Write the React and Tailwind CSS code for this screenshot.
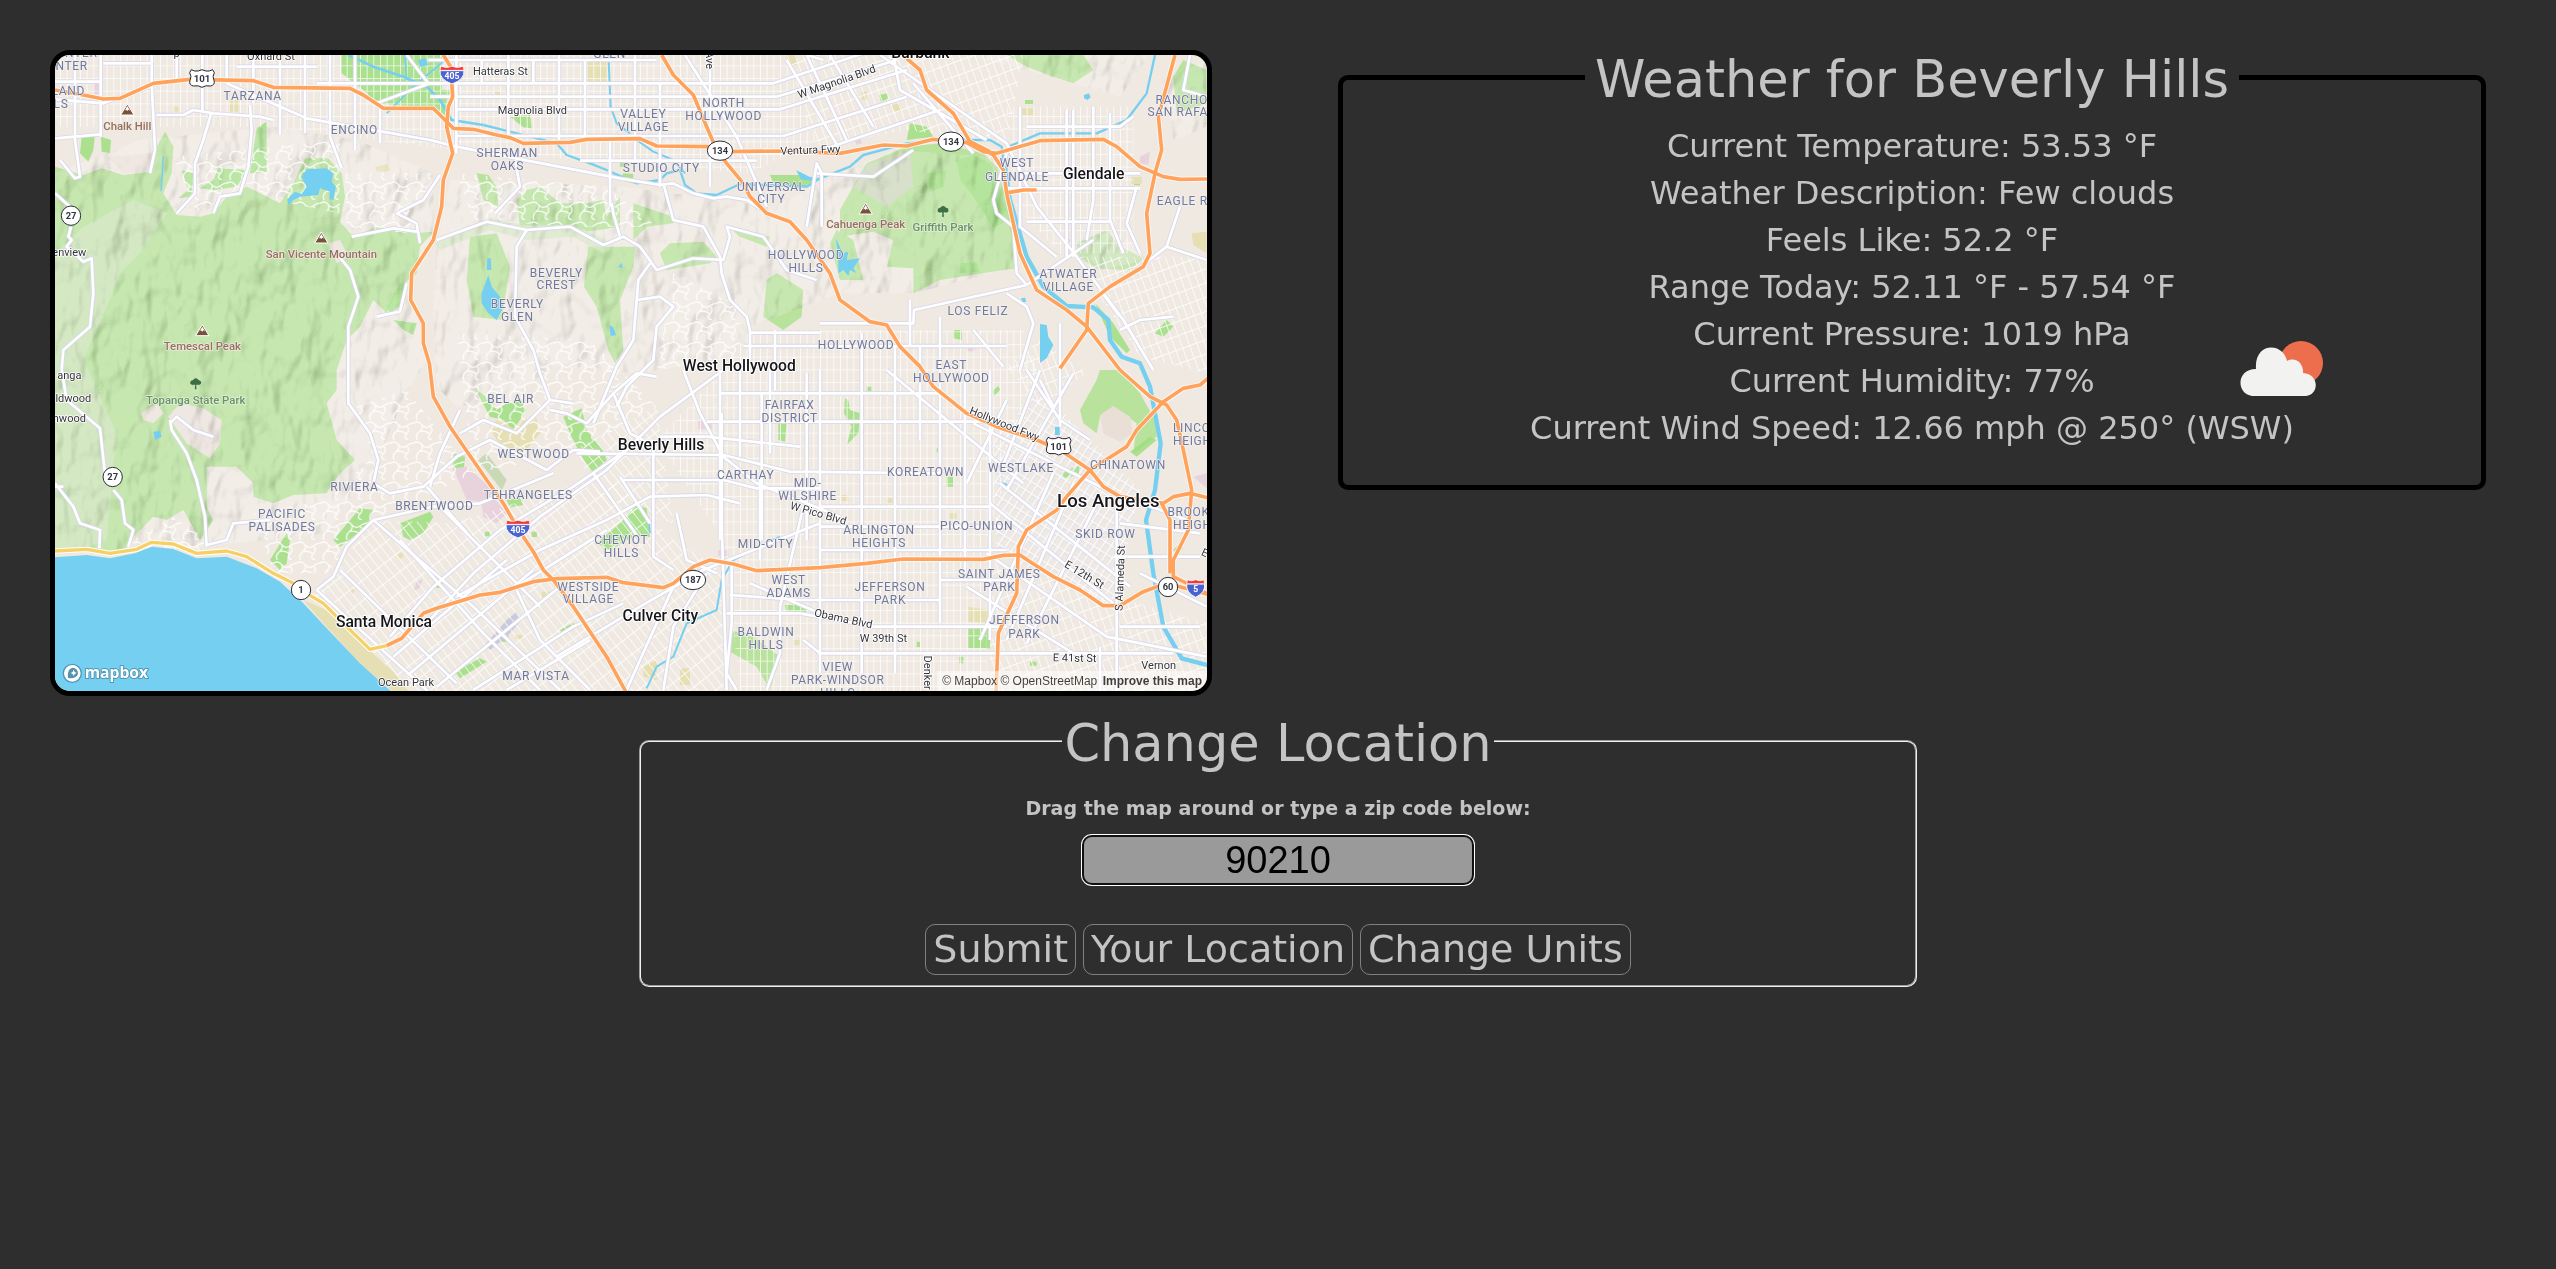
import React, { useState } from "react";

/* ---------- map data: one unit is a third of a map pixel ---------- */

const HILLS = [
  "M45 380 130 405 185 385 250 405 330 395 345 330 375 275 400 320 395 400 370 460 410 525 480 530 520 520 560 470 620 440 720 490 760 430 795 355 865 355 905 400 915 470 900 545 940 590 1010 560 1120 580 1180 575 1140 620 1130 700 1080 740 1040 820 1000 780 960 860 920 900 890 990 890 1050 860 1090 890 1200 945 1260 900 1300 860 1360 760 1365 700 1390 640 1370 640 1330 590 1280 500 1280 500 1400 520 1440 480 1500 430 1410 380 1440 340 1430 270 1500 265 1520 210 1545 130 1530 45 1535Z",
  "M1290 590 1370 580 1410 680 1385 840 1300 830 1280 720Z",
  "M1430 480 1460 450 1500 440 1560 490 1640 490 1690 480 1700 530 1740 470 1740 560 1640 575 1570 555 1440 560Z",
  "M1310 400 1345 405 1370 440 1375 500 1330 480Z",
  "M1645 620 1785 620 1780 680 1740 780 1750 930 1725 970 1705 930 1670 800 1632 740Z",
  "M1780 490 1900 530 1900 550 1820 560 1780 600Z",
  "M1860 640 1890 610 1990 605 2030 650 2010 670 1880 690Z",
  "M2060 555 2190 590 2180 620 2100 590Z",
  "M2180 720 2210 700 2290 750 2285 830 2230 870 2170 830Z",
  "M2400 510 2450 420 2480 370 2600 320 2700 310 2830 340 2870 380 2900 480 2915 560 2920 640 2925 685 2700 720 2620 760 2620 685 2540 680 2560 600 2500 575 2400 590Z",
  "M2370 610 2390 570 2440 600 2470 720 2400 720Z",
  "M3110 610 3200 570 3240 620 3310 655 3270 690 3170 685 3115 650Z",
  "M3120 1110 3170 1020 3180 990 3240 990 3300 1060 3350 1150 3350 1190 3280 1240 3290 1150 3220 1100 3180 1130 3170 1180 3130 1150Z",
  "M2070 1770 2140 1790 2220 1850 2190 1950 2150 1880 2060 1830Z",
  "M2900 45 3130 45 3160 90 3100 130 3040 110 2960 80Z",
  "M3430 60 3500 90 3500 190 3410 220 3400 110Z",
];

/* dry slopes, half covered with scrub */
const SCRUB = [
  "M45 640 130 560 280 480 380 520 300 640 240 700 200 800 130 960 230 1180 200 1500 120 1530 45 1530Z",
  "M1185 610 1350 535 1450 555 1600 555 1700 600 1690 640 1600 590 1460 600 1350 570 1200 630Z",
  "M3110 610 3200 570 3240 620 3310 655 3270 690 3170 685 3115 650Z",
];

const PARKS = [
  "M950 45 1205 45 1205 190 1170 205 1010 190 970 150 905 100 905 45Z",
  "M1170 150 1230 150 1220 230 1180 200Z",
  "M125 290 165 280 160 330 145 365 120 340Z",
  "M183 290 213 300 210 340 185 335Z",
  "M650 265 680 245 680 395 630 400Z",
  "M535 385 620 390 590 440 520 450 480 445 520 420Z",
  "M425 390 460 400 455 470 415 475 445 450Z",
  "M1410 230 1470 225 1475 265 1450 262Z",
  "M1670 70 1700 70 1700 125 1670 122Z",
  "M1750 400 1780 402 1778 430 1740 420Z",
  "M2190 405 2290 405 2330 420 2290 440 2200 430Z",
  "M2750 360 2800 345 2850 370 2880 440 2905 540 2860 565 2800 470 2760 420Z",
  "M2660 400 2720 390 2710 440 2670 455Z",
  "M2760 670 2810 665 2820 695 2760 700Z",
  "M880 1500 960 1405 1000 1410 980 1460 900 1520Z",
  "M1080 1450 1170 1415 1180 1430 1150 1480 1110 1500 1090 1490Z",
  "M690 1560 740 1480 750 1500 740 1570 720 1590Z",
  "M1570 1130 1625 1105 1640 1170 1690 1230 1700 1260 1655 1300 1620 1240 1590 1180Z",
  "M1670 1510 1740 1450 1790 1395 1820 1405 1830 1490 1780 1490 1710 1530Z",
  "M1305 1045 1350 1080 1370 1110 1400 1090 1440 1080 1460 1110 1420 1170 1390 1140 1350 1130Z",
  "M1240 1240 1275 1250 1270 1300 1240 1290Z",
  "M1400 1380 1440 1375 1450 1395 1410 1402Z",
  "M2215 1150 2240 1150 2235 1205 2215 1200Z",
  "M2415 1075 2425 1080 2430 1110 2460 1120 2455 1180 2420 1215 2435 1160 2412 1120Z",
  "M1245 1895 1320 1855 1340 1865 1260 1915Z",
  "M1560 1770 1600 1748 1605 1765 1570 1785Z",
  "M2785 1762 2850 1762 2850 1825 2785 1825Z",
  "M3270 1235 3330 1190 3350 1200 3290 1250Z",
  "M2235 1695 2300 1695 2300 1715 2240 1720Z",
  "M2740 870 2765 870 2765 900 2740 895Z",
  "M2610 250 2660 260 2680 290 2600 300Z",
  "M3345 880 3380 840 3400 860 3370 890Z",
  "M3165 790 3220 850 3270 930 3260 940 3210 890Z",
  "M1040 800 1080 730 1100 730 1090 790 1050 820ZM1060 840 1130 850 1120 885 1090 870Z",
  "M2285 1080h18v20h-18zM2690 1225h16v12h-16zM2720 1310h20v30h-20zM2860 1050l15-12 5 12-20 20zM1740 360h20v20h-20zM3060 1300l60-25-5 30-40 8z",
  "M1380 1785h25v20h-25zM1190 1630h18v14h-18zM1475 1475h16v16h-16zM1335 1475h14v14h-14zM1665 1275h14v14h-14zM3400 1530l20-20 8 14-14 24zM2480 1040h14v14h-14zM1950 1585h18v16h-18zM2970 1865h20v12h-20zM2630 1805h10v16h-10zM2758 1850h12v20h-12zM3282 422h18v14h-18zM3520 400h8v8h-8zM2955 180h24v12h-24zM2518 165l25-5 0 16-20 10z",
];

const SAND = [
  "M1635 60 1702 60 1702 125 1635 125Z",
  "M1350 1160 1370 1140 1430 1170 1450 1140 1490 1135 1500 1180 1450 1240 1400 1230 1370 1200Z",
  "M570 180h25v35h-25zM400 200h15v15h-15zM1005 380l40-8 5 22h-40zM2240 45h30v30h-30zM1365 155h18v22h-18z",
  "M2940 205h40v20h-40zM2555 195l25-5 5 25h-22zM2465 155h16v25h-16zM3275 410h30v22h-30zM3455 580 3500 575 3500 640 3460 615Z",
  "M2785 1700 2840 1710 2870 1740 2830 1750 2785 1745Z",
  "M1810 1880 1850 1860 1850 1920 1810 1910ZM1920 1885h30v50h-30z",
  "M1505 1655h25v18h-25zM1425 1785h22v12h-22zM2260 1800h18v16h-18zM2405 1365h20v18h-20zM2730 1420h20v16h-20zM2540 1375h18v14h-18zM3090 1350h16v22h-16zM1070 1545l14-8 8 10-12 10zM930 1645l14 6-6 12-10-8z",
  "M790 1680 870 1715 960 1805 1060 1895 1110 1960 1065 1960 960 1870 860 1760Z",
];

const CAMPUS = [
  "M160 128h20v35h-20zM1240 1285 1280 1280 1360 1350 1340 1385 1280 1380ZM1325 1390 1360 1370 1400 1420 1370 1450 1330 1430Z",
  "M3300 350 3330 335 3325 375 3300 370ZM3460 1310 3500 1300 3500 1345ZM1975 1140h40v28h-40zM2035 1530h30v18h-30zM2440 290l20-5 5 25-15 5z",
  "M1130 1625l18-8-10 28-18 8zM3076 597h14v12h-14zM2780 920h25v14h-25z",
];

const LAKES = [
  "M800 388 860 385 880 400 875 425 888 440 880 480 868 478 870 455 840 445 835 465 780 470 760 480 745 495 742 478 765 455 785 462 800 440 785 410Z",
  "M368 345 372 350 366 450 361 455Z",
  "M1342 655 1352 655 1354 690 1340 690ZM1345 705 1355 740 1380 770 1390 800 1370 840 1345 820 1325 790 1325 760Z",
  "M1735 680 1745 668 1748 685ZM1708 855 1720 862 1728 885 1712 888Z",
  "M2388 595 2408 640 2425 635 2420 660 2460 655 2440 685 2450 700 2430 690 2425 708 2410 690 2395 700 2395 660Z",
  "M3000 852 3020 855 3025 890 3040 915 3020 955 3000 968Z",
  "M340 1175 360 1172 365 1190 345 1200Z",
  "M2885 1325 2910 1335 2900 1348ZM3045 1160h14v25h-14zM2268 390l40 20 30 5-20 8-35-5zM3132 165l15-5 5 12-10 8-10-5zM2943 775l12-2 4 12-12 2zM1135 60l20-5 10 20-25 5z",
];

const OCEAN =
  "M45 1552 140 1545 210 1555 285 1540 335 1520 400 1527 470 1555 560 1550 650 1585 720 1625 790 1690 860 1765 960 1870 1060 1960 45 1960Z";

const RIVERS = [
  { d: "M925 45 1000 80 1090 110 1160 140 1200 180 1235 240 1330 255", w: 8 },
  { d: "M1330 255 1550 310 1580 345 1650 370 1700 390 1790 430 1860 420 1880 400 1920 390 1935 435 1970 460 2030 465 2100 432 2300 440 2340 415 2430 380 2470 345 2600 310 2700 300 2850 300 2885 320 2895 400", w: 7 },
  { d: "M2895 380 2910 480 2960 650 3010 740 3080 798 3160 802 3205 840 3210 900 3245 950 3300 970 3330 1040 3362 1210 3345 1350 3318 1440 3340 1600 3370 1760 3425 1855 3505 1876", w: 13 },
  { d: "M1705 45 1712 200 1730 250 1770 280M1790 300 1840 335 1900 360 1935 400", w: 6 },
  { d: "M2910 318 3000 280 3170 280 3260 240 3320 160 3345 45", w: 7 },
  { d: "M2220 1490 2080 1560 2045 1620 2030 1710 1940 1750 1900 1850 1850 1880 1820 1945", w: 6 },
  { d: "M1095 45 1100 120M1040 220 1120 140 1215 60M1825 1430 1830 1480", w: 5 },
];

const STREETS = [
  "M105 45V300L120 410 105 415 60 360M182 45V290M335 45V130M410 45V115M487 45V215M560 45V125M640 45V190M720 60V285M795 45V280M870 45V290M945 45V330M1020 205V310",
  "M45 125H180M190 70H330L340 60M45 295 180 283M45 178 190 190 330 140M590 80H830M830 130H2200M560 130 640 165 800 235 1170 300 1250 320 1400 350 1740 415 1860 435 1900 430 1960 460 2020 475 2060 470 2120 480 2200 530",
  "M350 225 430 225 460 210 520 220 660 230 700 240M515 215 490 300 465 370 465 460 410 520M630 195 635 270 625 380 600 460 540 470 520 520M335 130 345 330 330 400M945 150 1010 190 1170 130 1205 130M1100 45 1165 130M870 290 905 385",
  "M45 460 90 500M93 560 85 590 95 600 80 620 130 665 155 655 160 760 150 860 70 930 65 990M65 990 80 1080 180 1165 195 1300M220 1350 245 1380 255 1450 280 1470 265 1520",
  "M45 1330 100 1400 120 1450 180 1470 178 1525M890 640 930 690 955 770 925 860 925 990 925 1090 990 1180 1015 1260 1000 1330M1200 405 1150 480 1070 520 1130 550 1140 610M935 590 1060 565 1130 575M1010 830 1080 815 1100 730",
  "M390 1140 395 1170 440 1240 470 1320 495 1430 500 1520M390 1150 410 1130 460 1170 520 1190M500 1515 560 1500 580 1450 690 1440",
  "M1165 60H1850M1170 170H2210M1250 208H2220M1250 288H2230M1620 362H2150M1249 45V340M1405 45V290M1557 45V300M1635 60V300M1710 300V500M1785 45V360M1860 130V440M2010 45V440M1325 60V130M1480 60V130",
  "M1935 45 2090 290 2180 500M2200 130 2500 30M2210 170 2570 60M2220 208 2600 90M2230 288 2600 170M2240 60 2400 330M2300 45 2420 300M2370 45 2500 260M2520 45 2900 310 2990 500 3110 650 3250 840 3340 990M2620 130 2800 340M2560 45 2580 150 2840 300M2345 330 2700 210",
  "M1190 600 1340 545 1460 570 1590 560 1690 615 1750 590 1800 620 1850 690 1960 655 2050 660 2070 590 2060 560 2170 590 2240 690 2330 720",
  "M1460 570 1430 620 1425 830 1480 930 1500 1000 1530 1080 1600 1090M1365 520 1440 440 1425 360M1740 590 1720 520 1715 490M1870 430 1900 540 1990 560 2040 650 2045 700 2070 780 2120 830 2130 870M1830 670 1795 720 1780 900 1730 980 1660 1150",
  "M1790 780 1860 770 1900 800 1850 860 1840 960 1760 1040 1730 1100M2130 878H2340M2110 918H2900M2340 850H2620L2622 810 2960 735 3100 640 3160 600M2370 45V60M2345 560 2345 400 2330 370 2300 560",
  "M2130 870V960M2205 870V1050M2340 990V1900M2465 880V1900M2640 920V1200M2565 920V1900M2700 990V1750M2775 990V1600M2850 990V1800M2300 1000V1500M2165 1060V1500",
  "M2040 1060H2700M2000 1145H2850M1860 1190H2000L2280 1220M1610 1240 2050 1245 2250 1295 2700 1300M1750 1320H2050L2150 1345 2340 1345M2340 1400H2850M2340 1460H2900M2340 1530H2900M2070 1665 2280 1680 2700 1680M2060 1720H2280L2500 1760H2900M2340 1840H3400M2700 1620H2900",
  "M45 1340 70 1340M1160 1750 1300 1600 1500 1430 1700 1290 1860 1130 2050 990M1050 1790 1180 1640 1380 1470 1600 1340 1760 1230M1250 1670 1500 1530 1700 1440 1830 1370 2000 1365 2100 1390M1430 1640 1700 1470M1550 1850 1800 1700 1990 1590 2340 1450",
  "M1000 1440 1180 1400 1320 1390 1540 1300M1000 1330 1050 1360 1150 1340 1250 1250 1350 1200 1520 1290 1600 1230 1680 1235M1000 1440 920 1520 880 1610 830 1650M830 1650 1170 1960M900 1590 1250 1930M1000 1440 1300 1700 1560 1950M1200 1400 1500 1700M1160 1340 1290 1490",
  "M1260 1110 1200 1240 1170 1340M1260 1180 1330 1140 1430 1180 1530 1080M1530 1110 1580 1120 1640 1150 1720 1060 1790 1000 1850 1010M1720 1060 1770 1180 1810 1200M1660 1300 1800 1500M1740 1310 1830 1450M1840 1220V1550L1900 1590M1910 1420 1940 1560 2030 1600",
  "M1930 990 1980 1120 2050 1250 2150 1330 2300 1390 2400 1430M2040 990V1500M2100 990V1250M2190 990V1240M2045 1120V1450L2060 1950M2160 1300V1560M1300 1950 1600 1760 1750 1690M1400 1950 1650 1800M1430 1650 1500 1800 1650 1950M2075 1570V1750L2060 1900 2090 1950M2220 1700V1840L2180 1950M2290 1400 2220 1700",
  "M1060 1850 1400 1560M1110 1900 1480 1590M1190 1940 1560 1640M1080 1500 1330 1780 1500 1950M1900 1640 1800 1860 1760 1950M2000 1600 1900 1760 1870 1950M2130 1630 2340 1720M2290 1800 2340 1840",
  "M2900 340 2860 480 2870 520 2920 560 2930 700 2960 735M2940 200V560L3050 650M3100 210V650M3080 210V650M3160 200V480L3140 600M3210 220V540L3250 640M2900 445H3300M2960 545H3210M2940 400H3300M2960 260H3240L3280 230M3290 440 3260 550 3300 640",
  "M2540 990 2950 1330M2900 1080 2780 1330M3000 990 2880 1300M3100 1000 2900 1350M2800 1150 3200 1350 3440 1440M3060 990V1160M2960 990 3060 1140 3150 1200M2900 760 2960 800 2980 850 2940 990M3240 870 3300 840 3400 830M3060 850V990M3180 750 3240 830M3000 1020 3040 1100",
  "M2880 1330 3270 1640M2850 1390 3220 1690M2840 1540 3200 1790 3500 1850M2780 1640 3100 1840M3040 1300 2820 1800M3100 1330 2900 1800M3180 1370 2960 1810M3230 1400V1960M3220 1550H3480M3240 1450 3480 1480M3240 1760H3480M3300 1600 3500 1700M3180 1820V1960",
  "M2300 45 2350 60M2330 400 2500 410 2620 330M2610 780V920M2700 830V1000M2800 870 2890 980M3450 45 3430 150 3500 170M3420 500 3380 620 3250 720M3380 620 3500 660",
];

const MINOR = [
  { d: "M45 45H2230L2330 300 2130 400 1250 330 1000 300 700 260 45 260Z", fill: "url(#grid)" },
  { d: "M2230 45H2950L2900 310 2600 270 2330 320Z", fill: "url(#gridTilt)" },
  { d: "M2130 870H2950L3000 1000 2900 1300 2840 1500 2840 1953H2100L2050 1500 1850 1200 2040 1000Z", fill: "url(#grid)" },
  { d: "M2900 200H3280V640H3060L2930 500Z", fill: "url(#grid)" },
  { d: "M880 1600 1000 1440 1240 1450 1700 1300 1900 1500 2060 1600 2050 1953H1120L820 1670Z", fill: "url(#gridDiag)" },
  { d: "M1600 1230 1850 1100 1900 1450 1700 1400Z", fill: "url(#gridDiag)" },
  { d: "M2860 1200 3000 1050 3300 1350 3220 1700 2870 1540Z", fill: "url(#gridCore)" },
  { d: "M2850 1560 3500 1750V1953H2850ZM3100 650 3500 650V1000L3300 950ZM3000 900 3140 1000 3000 1100 2900 980Z", fill: "url(#gridTilt)" },
  { d: "M400 350 900 300 900 520 700 480 620 430 470 520ZM915 400 1180 400 1100 580 920 560ZM640 1420 860 1380 1000 1250 950 1100 1100 1050 1300 1300 1000 1440 860 1600 700 1600ZM280 1500 400 1430 500 1500 480 1530 280 1530ZM1250 400 1700 440 1850 560 1600 560 1300 540ZM1900 700 2100 800 2100 950 1850 990ZM1250 880 1650 900 1850 1100 1600 1240 1300 1300Z", fill: "url(#lanes)" },
];

const FREEWAYS = [
  "M1040 1817 1085 1795 1150 1720 1190 1705 1320 1665 1380 1657 1480 1625 1550 1616 1700 1612 1750 1628 1870 1643 1900 1630 1960 1580 2010 1560 2080 1572 2150 1592 2340 1583 2480 1570 2590 1557 2830 1558 2890 1546 2940 1545 2970 1565 3040 1610 3120 1650 3190 1697 3240 1697 3310 1655 3350 1640 3400 1635 3510 1665",
  "M1210 45 1232 80 1238 170 1225 200 1220 260 1238 340 1210 420 1205 500 1180 600 1115 700 1112 780 1150 850 1150 910 1168 970 1180 1070 1230 1160 1340 1320 1390 1390 1430 1460 1480 1535 1510 1590 1540 1620 1600 1700 1700 1850 1760 1960",
  "M45 150 130 165 190 177 240 175 340 130 450 118 640 122 700 142 930 145 970 165 1030 205 1180 205 1200 225 1240 265 1300 268 1370 285 1410 293 1450 310 1590 307 1640 298 1800 296 1850 318 2010 320",
  "M1865 45 1900 105 1960 165 2000 260 2030 330 2060 370 2110 430 2130 470 2180 520 2250 545 2300 600 2370 700 2400 780 2490 845 2540 855 2580 920 2640 980 2680 1040 2780 1120 2870 1160 2990 1200 3060 1230 3150 1290 3190 1340 3240 1370 3370 1390 3400 1370 3450 1360 3510 1375",
  "M2060 335 2220 333 2400 340 2530 315 2600 318 2680 298 2780 308 2830 335 2870 340 3000 302 3190 298 3230 320 3300 380 3370 410 3420 418 3510 417",
  "M2600 55 2640 90 2660 150 2740 220 2790 305 2860 345 2890 390 2900 460 2940 640 2990 750 3080 810 3140 860 3240 990 3330 1070 3380 1095 3410 1140 3430 1230 3455 1350 3445 1470 3400 1560 3400 1610 3510 1665",
  "M3405 45 3355 230 3365 330 3345 400 3320 520 3330 640 3310 680 3210 740 3145 790 3140 870 3060 985",
  "M3510 1010 3480 1035 3430 1045 3370 1085 3290 1170 3260 1220 3150 1290 3080 1370 3050 1410 2960 1470 2935 1520 2930 1660 2875 1780 2868 1960",
  "M3365 1390 3390 1440 3390 1600M2905 458 2950 450 2990 450M2780 300 2850 335",
];

const COAST_ROAD =
  "M45 1533 140 1528 210 1540 290 1528 335 1507 400 1512 470 1540 560 1533 620 1550 700 1600 760 1630 783 1650 850 1690 920 1760 990 1828 1040 1817";

const DISTRICTS = [
  [95, 90, "NTER"], [85, 165, "LAND"], [63, 203, "LS"], [100, 50, "CENTER"],
  [638, 180, "TARZANA"], [943, 283, "ENCINO"], [1709, 54, "GLEN"],
  [1810, 234, "VALLEY"], [1810, 273, "VILLAGE"], [2051, 202, "NORTH"], [2051, 241, "HOLLYWOOD"],
  [1402, 350, "SHERMAN"], [1402, 390, "OAKS"], [1864, 396, "STUDIO CITY"],
  [2194, 452, "UNIVERSAL"], [2194, 490, "CITY"], [2298, 658, "HOLLYWOOD"], [2298, 696, "HILLS"],
  [1549, 711, "BEVERLY"], [1549, 748, "CREST"], [1432, 805, "BEVERLY"], [1432, 843, "GLEN"],
  [2931, 382, "WEST"], [2931, 422, "GLENDALE"], [3425, 192, "RANCHO"], [3435, 229, "SAN RAFAEL"],
  [3465, 496, "EAGLE ROCK"], [3085, 714, "ATWATER"], [3085, 752, "VILLAGE"], [2814, 826, "LOS FELIZ"],
  [2448, 927, "HOLLYWOOD"], [2734, 988, "EAST"], [2734, 1027, "HOLLYWOOD"],
  [1412, 1088, "BEL AIR"], [1481, 1255, "WESTWOOD"], [1465, 1378, "TEHRANGELES"], [1183, 1410, "BRENTWOOD"],
  [943, 1352, "RIVIERA"], [726, 1434, "PACIFIC"], [726, 1473, "PALISADES"],
  [2249, 1106, "FAIRFAX"], [2249, 1145, "DISTRICT"], [2117, 1316, "CARTHAY"],
  [2303, 1342, "MID-"], [2303, 1381, "WILSHIRE"], [1744, 1512, "CHEVIOT"], [1744, 1552, "HILLS"],
  [2177, 1523, "MID-CITY"], [1645, 1653, "WESTSIDE"], [1645, 1690, "VILLAGE"],
  [2246, 1631, "WEST"], [2246, 1671, "ADAMS"], [2178, 1788, "BALDWIN"], [2178, 1826, "HILLS"],
  [1488, 1921, "MAR VISTA"], [2393, 1893, "VIEW"], [2393, 1933, "PARK-WINDSOR"], [2393, 1970, "HILLS"],
  [2657, 1307, "KOREATOWN"], [2943, 1297, "WESTLAKE"], [3264, 1288, "CHINATOWN"],
  [3480, 1175, "LINCOLN"], [3480, 1214, "HEIGHTS"], [2810, 1469, "PICO-UNION"], [3196, 1495, "SKID ROW"],
  [2517, 1482, "ARLINGTON"], [2517, 1521, "HEIGHTS"], [2878, 1613, "SAINT JAMES"], [2878, 1652, "PARK"],
  [2550, 1654, "JEFFERSON"], [2550, 1692, "PARK"], [2953, 1753, "JEFFERSON"], [2953, 1793, "PARK"],
  [3480, 1428, "BROOKLYN"], [3480, 1466, "HEIGHTS"],
];

const CITIES = [
  [2641, 54, "Burbank", 47], [3161, 416, "Glendale", 47], [2098, 992, "West Hollywood", 47],
  [1863, 1231, "Beverly Hills", 47], [1861, 1744, "Culver City", 47], [1032, 1760, "Santa Monica", 47],
  [3205, 1402, "Los Angeles", 56],
];

const ROAD_NAMES = [
  [693, 50, "Oxnard St", 0], [410, 40, "p", 0], [1381, 95, "Hatteras St", 0], [1477, 210, "Magnolia Blvd", 0],
  [2010, 60, "Ave", 90], [2390, 125, "W Magnolia Blvd", -19], [2311, 330, "Ventura Fwy", -2],
  [2335, 1420, "W Pico Blvd", 16], [2893, 1152, "Hollywood Fwy", 22], [3133, 1604, "E 12th St", 31],
  [3240, 1614, "S Alameda St", -88], [2410, 1736, "Obama Blvd", 12], [2530, 1795, "W 39th St", 0],
  [2663, 1898, "Denker", 90], [3104, 1854, "E 41st St", 1], [3356, 1875, "Vernon", 0], [3520, 1550, "E 4th", 25],
  [1098, 1927, "Ocean Park", 0], [88, 638, "enview", 0], [88, 1006, "anga", 0], [100, 1076, "ldwood", 0], [88, 1136, "nwood", 0],
];

const PEAKS = [
  [262, 210, "Chalk Hill", 258], [844, 594, "San Vicente Mountain", 642],
  [487, 872, "Temescal Peak", 920], [2477, 507, "Cahuenga Peak", 554],
];

const TREES = [
  [467, 1030, "Topanga State Park", 1080], [2709, 513, "Griffith Park", 563],
];

const HALO = "[paint-order:stroke] [stroke-linejoin:round]";

function Streets() {
  return (
    <g fill="none" strokeLinejoin="round">
      {STREETS.map((d) => (
        <path key={d} d={d} stroke="#d8d8e9" strokeWidth="13" />
      ))}
      {STREETS.map((d) => (
        <path key={d} d={d} stroke="#ffffff" strokeWidth="8" />
      ))}
    </g>
  );
}

function RouteShield({ x, y, n }) {
  const wide = n.length > 2;
  return (
    <g>
      <ellipse cx={x} cy={y} rx={wide ? 38 : 29} ry="29" fill="#fff" stroke="#2b303c" strokeWidth="3" />
      <text x={x} y={y + 10} textAnchor="middle" fontSize="28" fontWeight="700" fill="#2f3440">{n}</text>
    </g>
  );
}

function UsShield({ x, y }) {
  return (
    <g transform={`translate(${x} ${y})`}>
      <path
        d="M-32-26-22-22Q-12-20 0-26Q12-20 22-22L32-26 37-17Q30-6 36 6Q40 20 26 23Q10 20 0 27Q-10 20-26 23Q-40 20-36 6Q-30-6-37-17Z"
        fill="#fff" stroke="#23262f" strokeWidth="3"
      />
      <text y="11" textAnchor="middle" fontSize="29" fontWeight="700" fill="#2f3440">101</text>
    </g>
  );
}

function Interstate({ x, y, n, w }) {
  return (
    <g transform={`translate(${x} ${y})`}>
      <path d={`M${-w}-12H${w}Q${w + 3} 14 0 28Q${-w - 3} 14 ${-w}-12Z`} fill="#4a63d0" stroke="#fff" strokeWidth="3" />
      <path d={`M${-w}-13L${-w + 3}-25Q-15-18 0-25Q15-18 ${w - 3}-25L${w}-13Z`} fill="#ee3b3b" stroke="#fff" strokeWidth="2" />
      <text y="12" textAnchor="middle" fontSize="26" fontWeight="700" fill="#fff">{n}</text>
    </g>
  );
}

function LocationMap() {
  return (
    <svg viewBox="45 45 3456 1908" className="block h-auto w-full font-[Roboto,sans-serif]" role="img" aria-label="Map of Beverly Hills and Los Angeles">
      <defs>
        <pattern id="grid" width="20" height="38" patternUnits="userSpaceOnUse">
          <path d="M0 0H20M0 0V38" stroke="#fff" strokeWidth="5" fill="none" />
        </pattern>
        <pattern id="gridTilt" width="22" height="40" patternUnits="userSpaceOnUse" patternTransform="rotate(-20)">
          <path d="M0 0H22M0 0V40" stroke="#fff" strokeWidth="5" fill="none" />
        </pattern>
        <pattern id="gridDiag" width="22" height="48" patternUnits="userSpaceOnUse" patternTransform="rotate(-38)">
          <path d="M0 0H22M0 0V48" stroke="#fff" strokeWidth="5" fill="none" />
        </pattern>
        <pattern id="gridCore" width="22" height="30" patternUnits="userSpaceOnUse" patternTransform="rotate(33)">
          <path d="M0 0H22M0 0V30" stroke="#dcdcec" strokeWidth="13" fill="none" />
          <path d="M0 0H22M0 0V30" stroke="#fff" strokeWidth="8" fill="none" />
        </pattern>
        <pattern id="lanes" width="70" height="60" patternUnits="userSpaceOnUse">
          <path d="M0 10Q15 0 25 14T50 18T70 10M12 60Q5 45 18 35T25 14M50 18Q62 30 50 42T55 60M18 35Q35 30 50 42" stroke="#fff" strokeWidth="4" fill="none" />
        </pattern>
        <filter id="relief" x="0" y="0" width="100%" height="100%">
          <feTurbulence type="fractalNoise" baseFrequency="0.012 0.007" numOctaves="3" seed="8" />
          <feColorMatrix type="matrix" values="0 0 0 0 0  0 0 0 0 0  0 0 0 0 0  1 0 0 0 0" />
          <feDiffuseLighting surfaceScale="48" diffuseConstant="1.2" lightingColor="#ffffff">
            <feDistantLight azimuth="225" elevation="58" />
          </feDiffuseLighting>
        </filter>
        <clipPath id="slopes">
          <path d="M45 400 300 300 700 260 950 300 1180 400 1180 580 1110 720 1160 960 1100 1060 1020 1240 860 1480 480 1520 340 1510 210 1540 45 1530ZM1230 420 1750 440 2200 500 2400 400 2560 330 2870 350 2930 680 2620 760 2400 760 2130 860 2040 960 1800 1000 1540 980 1400 1080 1250 1100 1190 1040 1180 800 1190 620Z" />
          <path d="M2780 45H3330L3240 170 3100 130 2960 90ZM3370 120 3501 60V260L3400 300ZM3110 600 3240 570 3320 660 3180 690Z" />
        </clipPath>
      </defs>

      <rect x="45" y="45" width="3456" height="1908" fill="#efe9e1" />
      <g fill="#b9e29d">{HILLS.map((d) => <path key={d} d={d} />)}</g>
      <g fill="#d2e4bf" opacity="0.7">{SCRUB.map((d) => <path key={d} d={d} />)}</g>
      <path d="M2440 440 2480 375 2610 330 2620 440 2540 500Z" fill="#cfd8bd" />
      <g fill="#ece3db">
        <path d="M303 1120 350 1090 370 1120 340 1150 310 1140ZM385 1130 420 1090 490 1105 545 1140 540 1210 510 1255 440 1210ZM200 350 340 340 320 395 250 400ZM865 610 900 600 925 650 890 670Z" />
      </g>
      <path d="M3180 1125 3220 1098 3270 1130 3278 1180 3240 1205 3190 1180Z" fill="#e9dfd6" />
      <g fill="#9fdf80" opacity="0.85">{PARKS.map((d) => <path key={d} d={d} />)}</g>
      <g fill="#e6dfb4">{SAND.map((d) => <path key={d} d={d} />)}</g>
      <g fill="#e8d2dc">{CAMPUS.map((d) => <path key={d} d={d} />)}</g>
      <path d="M1330 1820 1400 1740 1430 1715 1440 1745 1400 1790 1350 1830Z" fill="#c9cade" />
      <path d="M1315 1260 1340 1240 1400 1320 1385 1350Z" fill="#c9d9b6" />
      <g clipPath="url(#slopes)">
        <rect x="45" y="45" width="3456" height="1600" filter="url(#relief)" opacity="0.2" className="mix-blend-multiply" />
      </g>
      {MINOR.map((m) => <path key={m.d} d={m.d} fill={m.fill} opacity="0.85" />)}
      <g fill="#75cff0">
        {LAKES.map((d) => <path key={d} d={d} />)}
        <path d={OCEAN} />
      </g>
      <g fill="none" stroke="#75cff0" strokeLinejoin="round">
        {RIVERS.map((r) => <path key={r.d} d={r.d} strokeWidth={r.w} />)}
      </g>
      <Streets />
      <g fill="none" strokeLinejoin="round">
        <path d={COAST_ROAD} stroke="#fff" strokeWidth="16" />
        <path d={COAST_ROAD} stroke="#f6cf65" strokeWidth="10" />
        {FREEWAYS.map((d) => <path key={d} d={d} stroke="#fff" strokeOpacity="0.8" strokeWidth="16" />)}
        {FREEWAYS.map((d) => <path key={d} d={d} stroke="#ffa35c" strokeWidth="11" />)}
      </g>

      <g fontSize="36" fill="#6f789f" stroke="#f5f1ec" strokeWidth="4" textAnchor="middle" className={`${HALO} tracking-[2px]`}>
        {DISTRICTS.map(([x, y, t]) => <text key={`${x}-${y}`} x={x} y={y}>{t}</text>)}
      </g>
      <g fontSize="33" fill="#33333b" stroke="#fff" strokeWidth="5" textAnchor="middle" className={HALO}>
        {ROAD_NAMES.map(([x, y, t, a]) => (
          <text key={`${x}-${y}`} transform={`translate(${x} ${y}) rotate(${a})`} y="11">{t}</text>
        ))}
      </g>
      <g textAnchor="middle">
        {PEAKS.map(([x, y, t, ty]) => (
          <g key={t}>
            <path d={`M${x} ${y - 18}L${x + 20} ${y + 15}H${x - 20}Z`} fill="#7a5238" stroke="#fff" strokeWidth="3" />
            <path d={`M${x} ${y - 12}L${x + 8} ${y + 2} ${x + 3} ${y - 1} ${x} ${y + 3} ${x - 4} ${y - 1} ${x - 8} ${y + 2}Z`} fill="#fff" />
            <text x={x} y={ty + 11} fontSize="34" fontWeight="500" fill="#94705f" stroke="#f3ebe4" strokeWidth="4" className={HALO}>{t}</text>
          </g>
        ))}
        {TREES.map(([x, y, t, ty]) => (
          <g key={t}>
            <path d={`M${x - 17} ${y + 3}Q${x - 20} ${y - 9} ${x - 8} ${y - 11}Q${x} ${y - 22} ${x + 9} ${y - 11}Q${x + 20} ${y - 9} ${x + 17} ${y + 3}Q${x + 10} ${y + 8} ${x + 3} ${y + 5}L${x + 4} ${y + 19}H${x - 4}L${x - 3} ${y + 5}Q${x - 10} ${y + 8} ${x - 17} ${y + 3}Z`} fill="#3c7040" stroke="#e7f3dc" strokeWidth="2" />
            <text x={x} y={ty + 11} fontSize="34" fontWeight="500" fill="#68916a" stroke="#e4f1d9" strokeWidth="4" className={HALO}>{t}</text>
          </g>
        ))}
      </g>
      <g fontWeight="500" fill="#15151a" stroke="#fff" strokeWidth="6" textAnchor="middle" className={HALO}>
        {CITIES.map(([x, y, t, s]) => <text key={t} x={x} y={y} fontSize={s}>{t}</text>)}
      </g>

      <UsShield x={486} y={115} />
      <UsShield x={3056} y={1218} />
      <Interstate x={1236} y={104} n="405" w={36} />
      <Interstate x={1434} y={1466} n="405" w={36} />
      <Interstate x={3467} y={1644} n="5" w={27} />
      <RouteShield x={93} y={527} n="27" />
      <RouteShield x={218} y={1311} n="27" />
      <RouteShield x={783} y={1650} n="1" />
      <RouteShield x={2040} y={332} n="134" />
      <RouteShield x={2733} y={305} n="134" />
      <RouteShield x={1959} y={1620} n="187" />
      <RouteShield x={3384} y={1641} n="60" />

      <a href="https://www.mapbox.com/" aria-label="Mapbox homepage">
        <circle cx="97" cy="1900" r="27" fill="#fff" stroke="#4f97b5" strokeWidth="4" />
        <path d="M84 1914Q80 1888 97 1883Q114 1884 114 1901Q110 1917 84 1914Z" fill="#5592ab" />
        <path d="M101 1889 104 1896 110 1899 104 1902 101 1908 98 1902 92 1899 98 1896Z" fill="#fff" />
        <text x="134" y="1915" fontSize="47" fontWeight="700" fill="#fff" stroke="#4f97b5" strokeWidth="6" className={`${HALO} font-[Open_Sans,sans-serif]`}>mapbox</text>
      </a>
    </svg>
  );
}

function FewCloudsIcon() {
  return (
    <svg viewBox="0 0 100 100" className="size-[100px]" role="img" aria-label="Few clouds">
      <circle cx="69" cy="44" r="22" fill="#ec6e4c" />
      <path
        d="M20 77C4 75 4 50 24 50C22 23 51 23 55 42C64 37 72 45 71 54C88 55 87 76 74 77Z"
        fill="#f2f2f0"
      />
    </svg>
  );
}

const READINGS = [
  "Current Temperature: 53.53 °F",
  "Weather Description: Few clouds",
  "Feels Like: 52.2 °F",
  "Range Today: 52.11 °F - 57.54 °F",
  "Current Pressure: 1019 hPa",
  "Current Humidity: 77%",
  "Current Wind Speed: 12.66 mph @ 250° (WSW)",
];

function WeatherPanel() {
  return (
    <fieldset className="rounded-[10px] border-[5px] border-black">
      <legend className="mx-auto px-[10px] pt-1.5 text-center text-[51px] leading-[60px]">
        Weather for Beverly Hills
      </legend>
      <div className="grid pt-[13px] pb-[33px]">
        <div className="col-start-1 row-start-1 text-center text-[32px] leading-[47px]">
          {READINGS.map((line) => <p key={line}>{line}</p>)}
        </div>
        <div className="col-start-1 row-start-1 mr-[149px] mb-[33px] self-end justify-self-end">
          <FewCloudsIcon />
        </div>
      </div>
    </fieldset>
  );
}

function ActionButton({ children, type = "button" }) {
  return (
    <button type={type} className="rounded-[10px] border border-[#808080] px-[7px] text-[38px] leading-[49px]">
      {children}
    </button>
  );
}

function LocationForm() {
  const [zip, setZip] = useState("90210");
  return (
    <form className="mx-auto w-1/2" onSubmit={(e) => e.preventDefault()}>
      <fieldset className="rounded-[10px] border-2 border-[#f0f0f0] [border-style:groove]">
        <legend className="mx-auto px-[2px] pt-1.5 text-center text-[51px] leading-[60px]">Change Location</legend>
        <div className="flex flex-col items-center pt-[22px] pb-[10px]">
          <label htmlFor="zip" className="text-[19px] leading-6 font-bold">
            Drag the map around or type a zip code below:
          </label>
          <input
            id="zip"
            type="text"
            value={zip}
            onChange={(e) => setZip(e.target.value)}
            className="mt-[15px] h-[50px] w-[392px] rounded-[10px] border-2 border-[#101010] bg-[#9a9a9a] text-center font-['Liberation_Sans',sans-serif] text-[38px] leading-[46px] text-black ring-1 ring-white outline-none"
          />
          <div className="mt-[39px] flex gap-[7px]">
            <ActionButton type="submit">Submit</ActionButton>
            <ActionButton>Your Location</ActionButton>
            <ActionButton>Change Units</ActionButton>
          </div>
        </div>
      </fieldset>
    </form>
  );
}

export default function App() {
  return (
    <main className="min-h-screen bg-[#2e2e2e] font-['DejaVu_Sans',Verdana,sans-serif] text-[#c4c4c4]">
      <div className="grid grid-cols-2 items-start">
        <div className="pt-[50px] pr-[66px] pl-[50px]">
          <div className="relative overflow-hidden rounded-[20px] border-[5px] border-black">
            <LocationMap />
            <div className="absolute right-0 bottom-0 bg-white/50 px-[5px] font-['Liberation_Sans',sans-serif] text-xs leading-5 text-black/75">
              <a href="https://www.mapbox.com/about/maps/">© Mapbox</a>{" "}
              <a href="https://www.openstreetmap.org/about/">© OpenStreetMap</a>{" "}
              <a href="https://apps.mapbox.com/feedback/" className="ml-[2px] font-bold">Improve this map</a>
            </div>
          </div>
        </div>
        <div className="pt-11 pr-[70px] pl-[60px]">
          <WeatherPanel />
        </div>
      </div>
      <div className="pt-3">
        <LocationForm />
      </div>
    </main>
  );
}
